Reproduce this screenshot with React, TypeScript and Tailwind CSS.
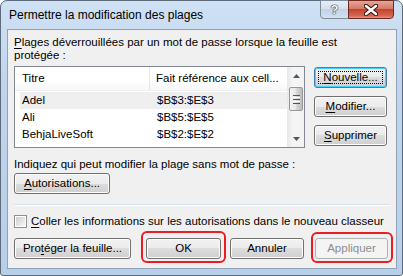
import React from "react";

type BtnProps = {
  children: React.ReactNode;
  className?: string;
  focused?: boolean;
  disabled?: boolean;
};

function WinButton({ children, className = "", focused, disabled }: BtnProps) {
  const skin = disabled
    ? "border-[#adb2b5] bg-[#f4f4f4] text-[#8d8d8d]"
    : focused
    ? "border-[#3c7fb1] bg-[linear-gradient(to_bottom,#f2f2f2_0%,#ebebeb_50%,#dddddd_50%,#cfcfcf_100%)] shadow-[inset_0_0_0_1px_#48d0ff] text-black"
    : "border-[#707070] bg-[linear-gradient(to_bottom,#f2f2f2_0%,#ebebeb_50%,#dddddd_50%,#cfcfcf_100%)] shadow-[inset_0_0_0_1px_#fcfcfc] text-black";
  return (
    <div
      className={`relative flex h-[21px] shrink-0 items-center justify-center rounded-[3px] border leading-none whitespace-nowrap ${skin} ${className}`}
    >
      {focused && (
        <span className="pointer-events-none absolute inset-[3px] border border-dotted border-black" />
      )}
      <span>{children}</span>
    </div>
  );
}

const U = ({ children }: { children: React.ReactNode }) => (
  <span className="underline underline-offset-[2px]">{children}</span>
);

const rows = [
  { title: "Adel", ref: "$B$3:$E$3", selected: true },
  { title: "Ali", ref: "$B$5:$E$5" },
  { title: "BehjaLiveSoft", ref: "$B$2:$E$2" },
];

function ScrollBar() {
  return (
    <div className="flex w-[17px] flex-col border-l border-[#e9e9e9] bg-[linear-gradient(to_right,#e9e9e9,#f5f5f5_30%,#f3f3f3)]">
      <div className="flex h-[17px] items-center justify-center">
        <svg width="7" height="4" viewBox="0 0 7 4">
          <path d="M3.5 0 L7 4 L0 4 Z" fill="#4d5966" />
        </svg>
      </div>
      <div className="mx-[1px] mt-[3px] flex h-[24px] flex-col items-center justify-center gap-[1px] rounded-[2px] border border-[#979797] bg-[linear-gradient(to_right,#f3f3f3,#e8e8e8_45%,#d6d6d6_55%,#bcbcbc)]">
        <span className="h-px w-[7px] bg-[#555]" />
        <span className="h-px w-[7px] bg-[#fff]" />
        <span className="h-px w-[7px] bg-[#555]" />
        <span className="h-px w-[7px] bg-[#fff]" />
        <span className="h-px w-[7px] bg-[#555]" />
      </div>
      <div className="flex-1" />
      <div className="flex h-[17px] items-center justify-center">
        <svg width="7" height="4" viewBox="0 0 7 4">
          <path d="M0 0 L7 0 L3.5 4 Z" fill="#4d5966" />
        </svg>
      </div>
    </div>
  );
}

export default function App() {
  return (
    <div className="relative h-[276px] w-[403px] overflow-hidden bg-white font-['Liberation_Sans',sans-serif] text-[11.5px] text-black">
      <div className="flex h-full w-full flex-col rounded-t-[7px] rounded-b-[3px] border border-[#5d6b7b] bg-[linear-gradient(to_bottom,#cfe1f4,#c0d5ed_30%,#b7cfe9)] pb-[6px] pl-[6px] pr-[5px]">
        {/* title bar */}
        <div className="flex h-[28px] shrink-0 items-start justify-between">
          <div className="mt-[7px] pl-[2px] text-[12px] leading-[15px]">
            Permettre la modification des plages
          </div>
          <div className="-mt-px mr-[3px] flex">
            <div className="flex h-[19px] w-[29px] items-center justify-center rounded-bl-[4px] border border-[#7d8b9b] bg-[linear-gradient(to_bottom,#e6eef7,#d4e0ee_50%,#c3d3e6_50%,#d3e1f0)] text-[13px] font-bold text-white [text-shadow:0_0_1px_#222,0_0_1px_#222,0_0_1px_#222]">
              ?
            </div>
            <div className="-ml-px flex h-[19px] w-[46px] items-center justify-center rounded-br-[4px] border border-[#6e2a20] bg-[linear-gradient(to_bottom,#e8a596,#d47a69_45%,#c5432d_50%,#d2634f_85%,#e2927f)]">
              <svg width="14" height="12" viewBox="0 0 14 12">
                <path d="M2 2 L12 10 M12 2 L2 10" stroke="#3a1510" strokeWidth="4.5" strokeLinecap="round" />
                <path d="M2 2 L12 10 M12 2 L2 10" stroke="#ffffff" strokeWidth="2.4" strokeLinecap="round" />
              </svg>
            </div>
          </div>
        </div>

        {/* client area */}
        <div className="flex flex-1 flex-col border border-[#8ea3ba] bg-[#f0f0f0] px-[6px]">
          <div className="whitespace-nowrap pt-[6px] leading-[13px]">
            <U>P</U>lages déverrouillées par un mot de passe lorsque la feuille est
            <br />
            protégée :
          </div>

          <div className="mt-[4px] flex">
            <div className="flex h-[82px] w-[291px] border border-[#828790] bg-white">
              <div className="flex flex-1 flex-col">
                <div className="flex h-[24px] border-b border-[#f0f0f0] bg-[linear-gradient(to_bottom,#ffffff,#ffffff_60%,#f6f7f8)]">
                  <div className="flex w-[135px] items-center border-r border-[#e3e6ea] pl-[7px]">Titre</div>
                  <div className="flex flex-1 items-center overflow-hidden whitespace-nowrap pl-[6px]">
                    Fait référence aux cell...
                  </div>
                </div>
                <div className="mt-px flex flex-col">
                  {rows.map((r) => (
                    <div
                      key={r.title}
                      className={`ml-[5px] flex h-[17px] items-center ${r.selected ? "bg-[#efefef]" : ""}`}
                    >
                      <div className="w-[130px] pl-[2px]">{r.title}</div>
                      <div className="pl-[7px]">{r.ref}</div>
                    </div>
                  ))}
                </div>
              </div>
              <ScrollBar />
            </div>

            <div className="ml-[9px] flex w-[73px] flex-col gap-[8px] pt-px">
              <WinButton focused>
                <U>N</U>ouvelle...
              </WinButton>
              <WinButton>
                <U>M</U>odifier...
              </WinButton>
              <WinButton>
                <U>S</U>upprimer
              </WinButton>
            </div>
          </div>

          <div className="mt-[10px] whitespace-nowrap leading-[13px]">
            Indiquez qui peut modifier la plage sans mot de passe :
          </div>
          <WinButton className="mt-[2px] w-[96px]">
            <U>A</U>utorisations...
          </WinButton>

          <div className="mt-[10px] h-[2px] border-t border-[#d5dfe5] border-b border-b-white" />

          <div className="mt-[9px] flex items-center">
            <div className="flex h-[13px] w-[13px] shrink-0 items-center justify-center border border-[#8e8f8f] bg-white">
              <div className="h-[9px] w-[9px] bg-[linear-gradient(135deg,#cbcfd5,#f6f6f6)]" />
            </div>
            <div className="ml-[4px] whitespace-nowrap leading-[13px]">
              <U>C</U>oller les informations sur les autorisations dans le nouveau classeur
            </div>
          </div>

          <div className="mt-[10px] flex">
            <WinButton className="w-[117px]">
              Pro<U>t</U>éger la feuille...
            </WinButton>
            <WinButton className="ml-[15px] w-[75px]">OK</WinButton>
            <WinButton className="ml-[9px] w-[74px]">Annuler</WinButton>
            <WinButton disabled className="ml-[11px] w-[73px]">
              Appliquer
            </WinButton>
          </div>
        </div>
      </div>

      {/* red annotation frames */}
      <div className="pointer-events-none absolute left-[141px] top-[231px] h-[32px] w-[85px] rounded-[6px] border-2 border-[#ec1c24]" />
      <div className="pointer-events-none absolute left-[311px] top-[232px] h-[31px] w-[82px] rounded-[6px] border-2 border-[#ec1c24]" />
    </div>
  );
}
